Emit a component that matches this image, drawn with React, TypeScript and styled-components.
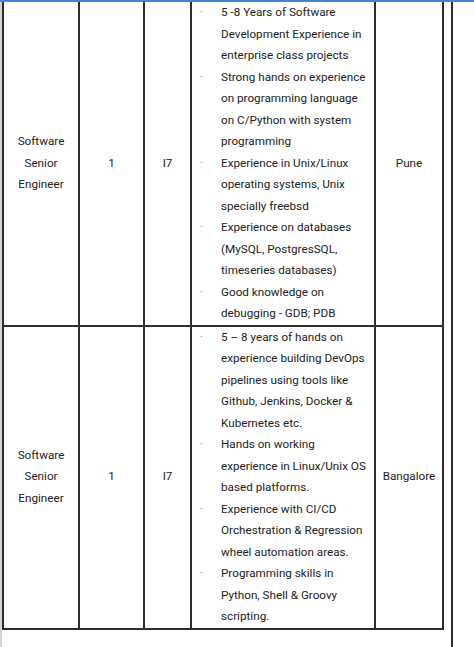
import React from 'react';
import styled, { createGlobalStyle } from 'styled-components';

const GlobalStyle = createGlobalStyle`
  html, body {
    margin: 0;
    padding: 0;
    background: #ffffff;
  }
  body {
    font-family: Roboto, "Liberation Sans", Arial, sans-serif;
    color: #222222;
  }
`;

type Job = {
  title: string[];
  count: string;
  level: string;
  skills: string[][];
  location: string;
};

const jobs: Job[] = [
  {
    title: ['Software', 'Senior', 'Engineer'],
    count: '1',
    level: 'I7',
    skills: [
      ['5 -8 Years of Software', 'Development Experience in', 'enterprise class projects'],
      ['Strong hands on experience', 'on programming language', 'on C/Python with system', 'programming'],
      ['Experience in Unix/Linux', 'operating systems, Unix', 'specially freebsd'],
      ['Experience on databases', '(MySQL, PostgresSQL,', 'timeseries databases)'],
      ['Good knowledge on', 'debugging - GDB; PDB'],
    ],
    location: 'Pune',
  },
  {
    title: ['Software', 'Senior', 'Engineer'],
    count: '1',
    level: 'I7',
    skills: [
      ['5 \u2013 8 years of hands on', 'experience building DevOps', 'pipelines using tools like', 'Github, Jenkins, Docker &', 'Kubernetes etc.'],
      ['Hands on working', 'experience in Linux/Unix OS', 'based platforms.'],
      ['Experience with CI/CD', 'Orchestration & Regression', 'wheel automation areas.'],
      ['Programming skills in', 'Python, Shell & Groovy', 'scripting.'],
    ],
    location: 'Bangalore',
  },
];

const App = () => {
  return (
    <>
      <GlobalStyle />
      <Page>
        <TopBar />
        <Body>
          <Gutter />
          <Table>
            <colgroup>
              <col style={{ width: 76 }} />
              <col style={{ width: 65 }} />
              <col style={{ width: 47 }} />
              <col style={{ width: 184 }} />
              <col style={{ width: 68 }} />
            </colgroup>
            <tbody>
              {jobs.map((job, i) => (
                <Row key={i} $first={i === 0}>
                  <Cell>
                    {job.title.map((t) => (
                      <Line key={t}>{t}</Line>
                    ))}
                  </Cell>
                  <Cell>{job.count}</Cell>
                  <Cell>{job.level}</Cell>
                  <SkillCell>
                    {job.skills.map((lines, k) => (
                      <Bullet key={k}>
                        <Dot>·</Dot>
                        <BulletText>
                          {lines.map((l) => (
                            <Line key={l}>{l}</Line>
                          ))}
                        </BulletText>
                      </Bullet>
                    ))}
                  </SkillCell>
                  <Cell>{job.location}</Cell>
                </Row>
              ))}
            </tbody>
          </Table>
          <PageEdge />
        </Body>
      </Page>
    </>
  );
};

const Page = styled.div`
  width: 474px;
  height: 647px;
  overflow: hidden;
  display: flex;
  flex-direction: column;
`;

const TopBar = styled.div`
  height: 2px;
  background: #3f86d4;
  flex-shrink: 0;
`;

const Body = styled.div`
  display: flex;
  flex: 1;
`;

const Gutter = styled.div`
  width: 2px;
  background: #d4d4d4;
  flex-shrink: 0;
`;

const Table = styled.table`
  width: 442px;
  border-collapse: collapse;
  table-layout: fixed;
  align-self: flex-start;
  font-size: 11.7px;
  line-height: 21.5px;
`;

const Row = styled.tr<{ $first: boolean }>`
  height: ${(p) => (p.$first ? '318px' : '295px')};
`;

const Cell = styled.td`
  border: 2px solid #2e2e2e;
  border-top: none;
  text-align: center;
  vertical-align: middle;
  padding: 0 2px;
  white-space: nowrap;
`;

const SkillCell = styled.td`
  border: 2px solid #2e2e2e;
  border-top: none;
  vertical-align: top;
  padding: 0;
  white-space: nowrap;
`;

const Bullet = styled.div`
  display: flex;
`;

const Dot = styled.span`
  width: 29px;
  padding-left: 8px;
  box-sizing: border-box;
  color: #8a8a8a;
  font-size: 11px;
  flex-shrink: 0;
`;

const BulletText = styled.div`
  display: flex;
  flex-direction: column;
`;

const Line = styled.div``;

const PageEdge = styled.div`
  width: 2px;
  margin-left: 7px;
  background: #2e2e2e;
  flex-shrink: 0;
`;

export default App;
